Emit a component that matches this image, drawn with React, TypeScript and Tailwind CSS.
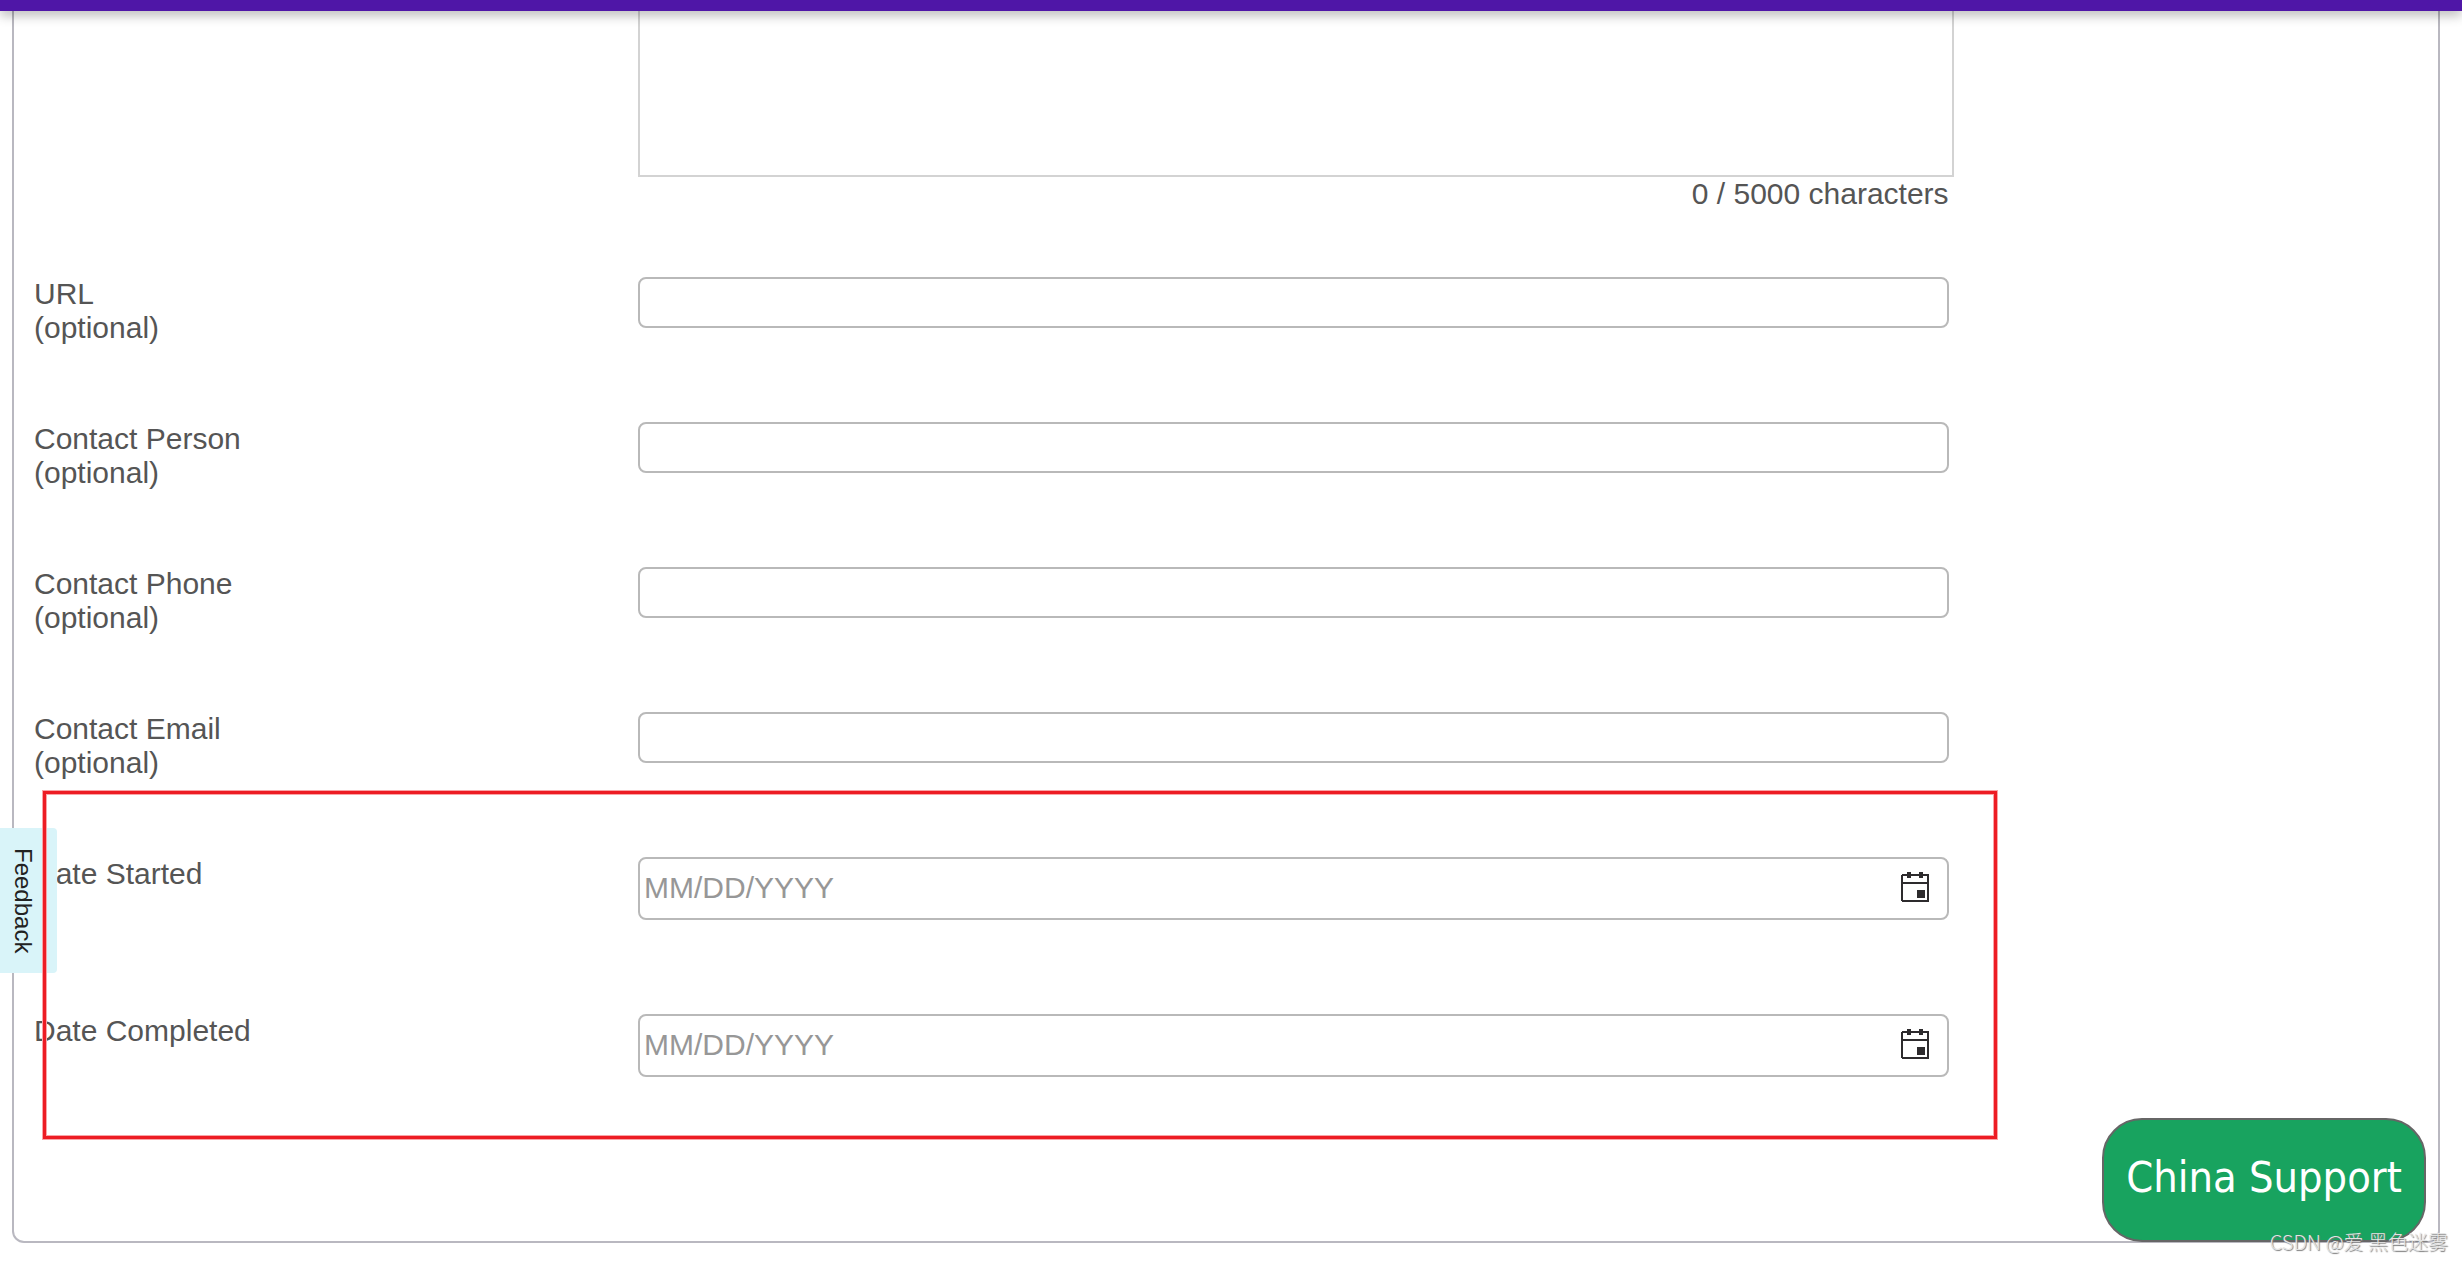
import React from "react";

const fields = [
  { id: "url", label: "URL", type: "url" },
  { id: "contact-person", label: "Contact Person", type: "text" },
  { id: "contact-phone", label: "Contact Phone", type: "tel" },
  { id: "contact-email", label: "Contact Email", type: "email" },
];

const dates = [
  { id: "date-started", label: "Date Started" },
  { id: "date-completed", label: "Date Completed" },
];

function CalendarIcon() {
  return (
    <svg width="28" height="30" viewBox="0 0 28 30" fill="#2d2b2d" aria-hidden="true" shapeRendering="crispEdges">
      <path fillRule="evenodd" d="M1 2h26l1 1v26l-1 1H1l-1-1V3zM2 4v6h24V4zM2 12v16h24V12z" />
      <path d="M6 0h4v6H6zM18 0h4v6h-4zM16 18h8v8h-8z" />
    </svg>
  );
}

function Row({ id, label, optional, children }: { id: string; label: string; optional?: boolean; children: React.ReactNode }) {
  return (
    <div className="flex items-start">
      <label htmlFor={id} className="w-1/4 shrink-0">
        {label}
        {optional && <span className="block">(optional)</span>}
      </label>
      <div className="ml-2 w-[55%]">{children}</div>
    </div>
  );
}

export default function App() {
  return (
    <div className="relative min-h-screen overflow-hidden bg-white font-['Liberation_Sans',Arial,sans-serif] text-[30px] leading-[34px] text-[#555]">
      <header className="relative z-10 h-[11px] bg-[#4f16a7] shadow-[0_4px_12px_rgba(0,0,0,0.3)]" />

      <form className="mr-[22px] ml-3 rounded-b-xl border-2 border-t-0 border-[#b9b8c0] px-5 pb-[164px]">
        <div className="mb-[66px] ml-[25%]">
          <div className="ml-2 w-[73.3%]">
            <textarea
              id="description"
              aria-label="Description"
              className="block h-[166px] w-[calc(100%+5px)] resize-none border-2 border-t-0 border-[#d3d3d3] bg-transparent px-1 outline-none"
            />
            <p className="text-right">0 / 5000 characters</p>
          </div>
        </div>

        <div className="flex flex-col gap-[94px]">
          {fields.map((f) => (
            <div key={f.id} className="h-[51px]">
              <Row id={f.id} label={f.label} optional>
                <input
                  id={f.id}
                  type={f.type}
                  className="block h-[51px] w-full rounded-lg border-2 border-[#b9b9b9] bg-transparent px-1 outline-none"
                />
              </Row>
            </div>
          ))}
          {dates.map((d) => (
            <Row key={d.id} id={d.id} label={d.label}>
              <div className="flex h-[63px] items-center rounded-lg border-2 border-[#b9b9b9]">
                <input
                  id={d.id}
                  type="text"
                  placeholder="MM/DD/YYYY"
                  className="min-w-0 flex-1 bg-transparent px-1 pb-[2px] outline-none placeholder:text-[#979797]"
                />
                <button type="button" aria-label={`Choose ${d.label}`} className="mr-[18px] pb-[3px]">
                  <CalendarIcon />
                </button>
              </div>
            </Row>
          ))}
        </div>
      </form>

      <button
        type="button"
        className="absolute top-[828px] left-0 flex h-[145px] w-[57px] items-center justify-center rounded-r bg-[#d9f4f9] pr-[11px] text-2xl leading-7 text-[#222] [writing-mode:vertical-rl]"
      >
        Feedback
      </button>

      <div className="pointer-events-none absolute top-[791px] right-[465px] left-[43px] h-[348px] border-[3px] border-[#ed1c24] shadow-[0_0_0_1px_#f9a4a7,inset_0_0_0_1px_#f9a4a7]" />

      <button
        type="button"
        className="absolute right-9 bottom-[19px] h-[124px] w-[324px] rounded-[40px] border-2 border-[#666] bg-[#18a35f] pb-[6px] font-['DejaVu_Sans_Condensed','DejaVu_Sans',sans-serif] text-[43px] whitespace-nowrap text-white"
      >
        China Support
      </button>

      <p className="absolute right-[14px] bottom-[3px] font-['Noto_Sans_CJK_SC',sans-serif] text-xl leading-8 font-light whitespace-nowrap text-[#e4e4e4] [text-shadow:1px_1px_1px_#777]">
        CSDN @爱 黑色迷雾
      </p>
    </div>
  );
}
